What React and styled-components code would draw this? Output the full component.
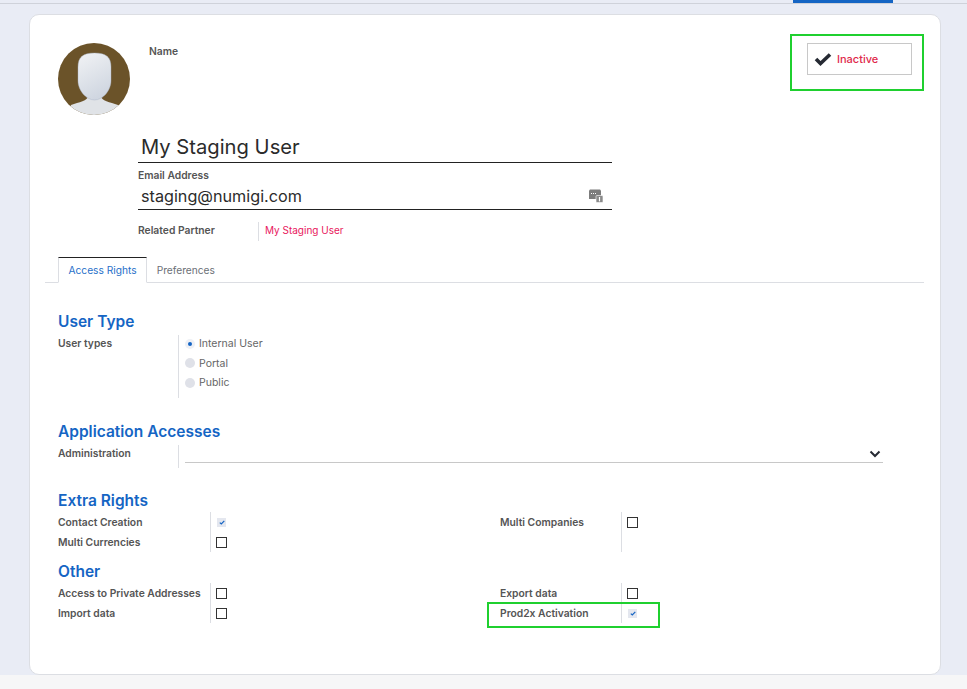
import React from 'react';
import styled, { createGlobalStyle, css } from 'styled-components';

const GlobalStyle = createGlobalStyle`
  html, body {
    margin: 0;
    padding: 0;
    background: #f6f6f7;
    font-family: Inter, 'Noto Sans', sans-serif;
  }
  * {
    box-sizing: border-box;
  }
`;

const Page = styled.div`
  height: 689px;
  overflow: hidden;
  display: flex;
  flex-direction: column;
`;

const TopBar = styled.div`
  height: 4px;
  flex: none;
  display: flex;
  justify-content: flex-end;
  padding-right: 74px;
  background: #e9ecf5;
  border-bottom: 1px solid #cfd2da;
`;

const ActiveMenu = styled.div`
  width: 100px;
  height: 3px;
  background: #1565c4;
`;

const Content = styled.div`
  height: 671px;
  flex: none;
  padding: 10px 26px 0 29px;
  background: #e9ecf5;
`;

const Card = styled.div`
  height: 661px;
  padding: 28px 16px 0 28px;
  background: #fff;
  border: 1px solid #dcdee3;
  border-radius: 10px;
`;

const Header = styled.div`
  display: flex;
  align-items: flex-start;
`;

const Avatar = styled.svg`
  width: 72px;
  height: 72px;
  flex: none;
  display: block;
`;

const NameLabel = styled.div`
  margin: 2px 0 0 19px;
  flex: 1;
  font-size: 10.3px;
  line-height: 13px;
  font-weight: 600;
  color: #555;
`;

const StatusButton = styled.div`
  position: relative;
  width: 105px;
  height: 32px;
  margin-right: 12px;
  display: flex;
  align-items: center;
  gap: 5px;
  padding-left: 6px;
  border: 1px solid #c8c8c8;
  font-size: 11px;
  font-weight: 500;
  color: #e0294a;
`;

const Highlight = styled.span`
  position: absolute;
  border: 2px solid #1fd02f;
  pointer-events: none;
  ${(p) => p.$box}
`;

const Identity = styled.div`
  margin: 16px 0 0 80px;
  width: 474px;
`;

const NameInput = styled.div`
  height: 32px;
  padding: 3px 0 0 3px;
  font-size: 20.2px;
  line-height: 26px;
  color: #2b2b2b;
  border-bottom: 1px solid #222;
`;

const FieldLabel = styled.div`
  margin-top: 6px;
  font-size: 10.3px;
  line-height: 13px;
  font-weight: 600;
  color: #555;
`;

const EmailInput = styled.div`
  height: 28px;
  display: flex;
  align-items: center;
  justify-content: space-between;
  padding: 0 9px 0 3px;
  font-size: 16.2px;
  color: #2b2b2b;
  border-bottom: 1px solid #222;
`;

const PartnerRow = styled.div`
  margin-top: 12px;
  height: 19px;
  display: flex;
  align-items: center;
`;

const PartnerLabel = styled.div`
  width: 121px;
  height: 100%;
  display: flex;
  align-items: center;
  padding-bottom: 3px;
  border-right: 1px solid #dcdee3;
  font-size: 10.3px;
  font-weight: 600;
  color: #555;
`;

const PartnerLink = styled.div`
  margin-left: 6px;
  padding-bottom: 3px;
  font-size: 10px;
  color: #e8175d;
`;

const Tabs = styled.div`
  margin: 16px 0 0 -13px;
  height: 26px;
  display: flex;
  padding-left: 13px;
  border-bottom: 1px solid #dcdee3;
`;

const Tab = styled.div`
  height: 26px;
  display: flex;
  align-items: center;
  padding: 0 9.5px;
  font-size: 10.2px;
  color: #6b6f76;
  ${(p) =>
    p.$active &&
    css`
      color: #1f6fc9;
      background: #fff;
      border: 1px solid #dcdee3;
      border-top-color: #222;
      border-bottom-color: #fff;
    `}
`;

const SectionTitle = styled.h2`
  margin: ${(p) => p.$top}px 0 0;
  font-size: 15.5px;
  line-height: 20px;
  font-weight: 600;
  color: #1565c4;
`;

const FieldRow = styled.div`
  margin-top: 3px;
  display: flex;
`;

const RowLabel = styled.div`
  width: 120px;
  padding-top: 2px;
  font-size: 10.3px;
  line-height: 13px;
  font-weight: 600;
  color: #555;
`;

const Options = styled.div`
  flex: 1;
  padding: 0 0 5.5px 6px;
  border-left: 1px solid #dcdee3;
`;

const RadioRow = styled.div`
  height: 19.5px;
  display: flex;
  align-items: center;
  gap: 4px;
  font-size: 10.5px;
  color: #666;
  &:first-child {
    margin-top: -1px;
  }
`;

const Radio = styled.span`
  width: 10px;
  height: 10px;
  display: flex;
  align-items: center;
  justify-content: center;
  border-radius: 50%;
  background: ${(p) => (p.$on ? '#eef0f5' : '#dfe1e8')};
  &::after {
    content: '';
    width: 4px;
    height: 4px;
    border-radius: 50%;
    background: ${(p) => (p.$on ? '#1565c4' : 'transparent')};
  }
`;

const SelectRow = styled.div`
  margin-top: 3px;
  display: flex;
  height: 23px;
`;

const SelectCell = styled.div`
  width: 705px;
  padding-left: 6px;
  border-left: 1px solid #dcdee3;
`;

const SelectBox = styled.div`
  height: 18px;
  display: flex;
  align-items: center;
  justify-content: flex-end;
  padding-right: 2px;
  border-bottom: 1px solid #c8c8c8;
`;

const BoolGrid = styled.div`
  margin-top: 1px;
  display: grid;
  grid-template-columns: 442px 1fr;
`;

const BoolColumn = styled.div`
  display: flex;
`;

const BoolLabels = styled.div`
  width: ${(p) => p.$width}px;
  flex: none;
`;

const BoolLabel = styled.div`
  height: 20px;
  display: flex;
  align-items: center;
  font-size: 10.3px;
  font-weight: 600;
  color: #555;
  white-space: nowrap;
`;

const BoolValues = styled.div`
  position: relative;
  height: 40px;
  padding-left: 5px;
  border-left: 1px solid #dcdee3;
`;

const BoolCell = styled.div`
  height: 20px;
  display: flex;
  align-items: center;
`;

const CheckBox = styled.span`
  width: 11px;
  height: 11px;
  display: block;
  border: 1px solid #333;
`;

const CheckedBox = styled.span`
  width: 9px;
  height: 9px;
  margin-left: 1px;
  display: flex;
  align-items: center;
  justify-content: center;
  background: #e4e7ef;
`;

const Check = () => (
  <svg width="6" height="5" viewBox="0 0 6 5">
    <path d="M.8 2.6 2.3 4 5.3 .8" fill="none" stroke="#1565c4" strokeWidth="1.2" />
  </svg>
);

const UserAvatar = () => (
  <Avatar viewBox="0 0 72 72">
    <defs>
      <linearGradient id="face" x1="0.3" y1="0" x2="0.7" y2="1">
        <stop offset="0" stopColor="#eef0f3" />
        <stop offset="1" stopColor="#cdd4df" />
      </linearGradient>
      <clipPath id="round">
        <circle cx="36" cy="36" r="36" />
      </clipPath>
    </defs>
    <g clipPath="url(#round)">
      <rect width="72" height="72" fill="#6b5329" />
      <path d="M10 72 13 62C21 59 30 58 30 53H43C43 58 52 59 60 62L63 72Z" fill="#e0e3e7" />
      <path
        d="M36.5 10C48 10 53 14 53 24V38C53 47 45 57 36.5 57C28 57 20 47 20 38V24C20 14 25 10 36.5 10Z"
        fill="url(#face)"
        stroke="#a9b4c8"
        strokeWidth="0.4"
      />
    </g>
  </Avatar>
);

const App = () => (
  <Page>
    <GlobalStyle />
    <TopBar>
      <ActiveMenu />
    </TopBar>
    <Content>
      <Card>
        <Header>
          <UserAvatar />
          <NameLabel>Name</NameLabel>
          <StatusButton>
            <svg width="18" height="14" viewBox="0 0 18 14">
              <path d="M2 7 6.5 11.5 16 2.5" fill="none" stroke="#262a33" strokeWidth="3.6" />
            </svg>
            Inactive
            <Highlight $box="left: -18px; top: -10px; width: 134px; height: 57px;" />
          </StatusButton>
        </Header>
        <Identity>
          <NameInput>My Staging User</NameInput>
          <FieldLabel>Email Address</FieldLabel>
          <EmailInput>
            staging@numigi.com
            <svg width="14" height="14" viewBox="0 0 14 14">
              <path d="M0 1.5 1 .5H11L12 1.5V10H0Z" fill="#7c7c7c" />
              <path d="M2 4.5H7" stroke="#fff" strokeWidth="1" strokeDasharray="1 1" />
              <rect x="7" y="6.5" width="7" height="7" rx="1" fill="#8a8a8a" stroke="#fff" strokeWidth="0.6" />
              <path d="M10.5 8V12.4" stroke="#fff" strokeWidth="1.2" />
            </svg>
          </EmailInput>
          <PartnerRow>
            <PartnerLabel>Related Partner</PartnerLabel>
            <PartnerLink>My Staging User</PartnerLink>
          </PartnerRow>
        </Identity>
        <Tabs>
          <Tab $active>Access Rights</Tab>
          <Tab>Preferences</Tab>
        </Tabs>

        <SectionTitle $top={29}>User Type</SectionTitle>
        <FieldRow>
          <RowLabel>User types</RowLabel>
          <Options>
            <RadioRow>
              <Radio $on />
              Internal User
            </RadioRow>
            <RadioRow>
              <Radio />
              Portal
            </RadioRow>
            <RadioRow>
              <Radio />
              Public
            </RadioRow>
          </Options>
        </FieldRow>

        <SectionTitle $top={24}>Application Accesses</SectionTitle>
        <SelectRow>
          <RowLabel>Administration</RowLabel>
          <SelectCell>
            <SelectBox>
              <svg width="12" height="8" viewBox="0 0 12 8">
                <path d="M1.5 1.5 6 6 10.5 1.5" fill="none" stroke="#262a33" strokeWidth="2" />
              </svg>
            </SelectBox>
          </SelectCell>
        </SelectRow>

        <SectionTitle $top={23}>Extra Rights</SectionTitle>
        <BoolGrid>
          <BoolColumn>
            <BoolLabels $width={152}>
              <BoolLabel>Contact Creation</BoolLabel>
              <BoolLabel>Multi Currencies</BoolLabel>
            </BoolLabels>
            <BoolValues>
              <BoolCell>
                <CheckedBox>
                  <Check />
                </CheckedBox>
              </BoolCell>
              <BoolCell>
                <CheckBox />
              </BoolCell>
            </BoolValues>
          </BoolColumn>
          <BoolColumn>
            <BoolLabels $width={121}>
              <BoolLabel>Multi Companies</BoolLabel>
            </BoolLabels>
            <BoolValues>
              <BoolCell>
                <CheckBox />
              </BoolCell>
            </BoolValues>
          </BoolColumn>
        </BoolGrid>

        <SectionTitle $top={10}>Other</SectionTitle>
        <BoolGrid>
          <BoolColumn>
            <BoolLabels $width={152}>
              <BoolLabel>Access to Private Addresses</BoolLabel>
              <BoolLabel>Import data</BoolLabel>
            </BoolLabels>
            <BoolValues>
              <BoolCell>
                <CheckBox />
              </BoolCell>
              <BoolCell>
                <CheckBox />
              </BoolCell>
            </BoolValues>
          </BoolColumn>
          <BoolColumn>
            <BoolLabels $width={121}>
              <BoolLabel>Export data</BoolLabel>
              <BoolLabel>Prod2x Activation</BoolLabel>
            </BoolLabels>
            <BoolValues>
              <BoolCell>
                <CheckBox />
              </BoolCell>
              <BoolCell>
                <CheckedBox>
                  <Check />
                </CheckedBox>
              </BoolCell>
              <Highlight $box="left: -135px; top: 19px; width: 173px; height: 26px;" />
            </BoolValues>
          </BoolColumn>
        </BoolGrid>
      </Card>
    </Content>
  </Page>
);

export default App;
